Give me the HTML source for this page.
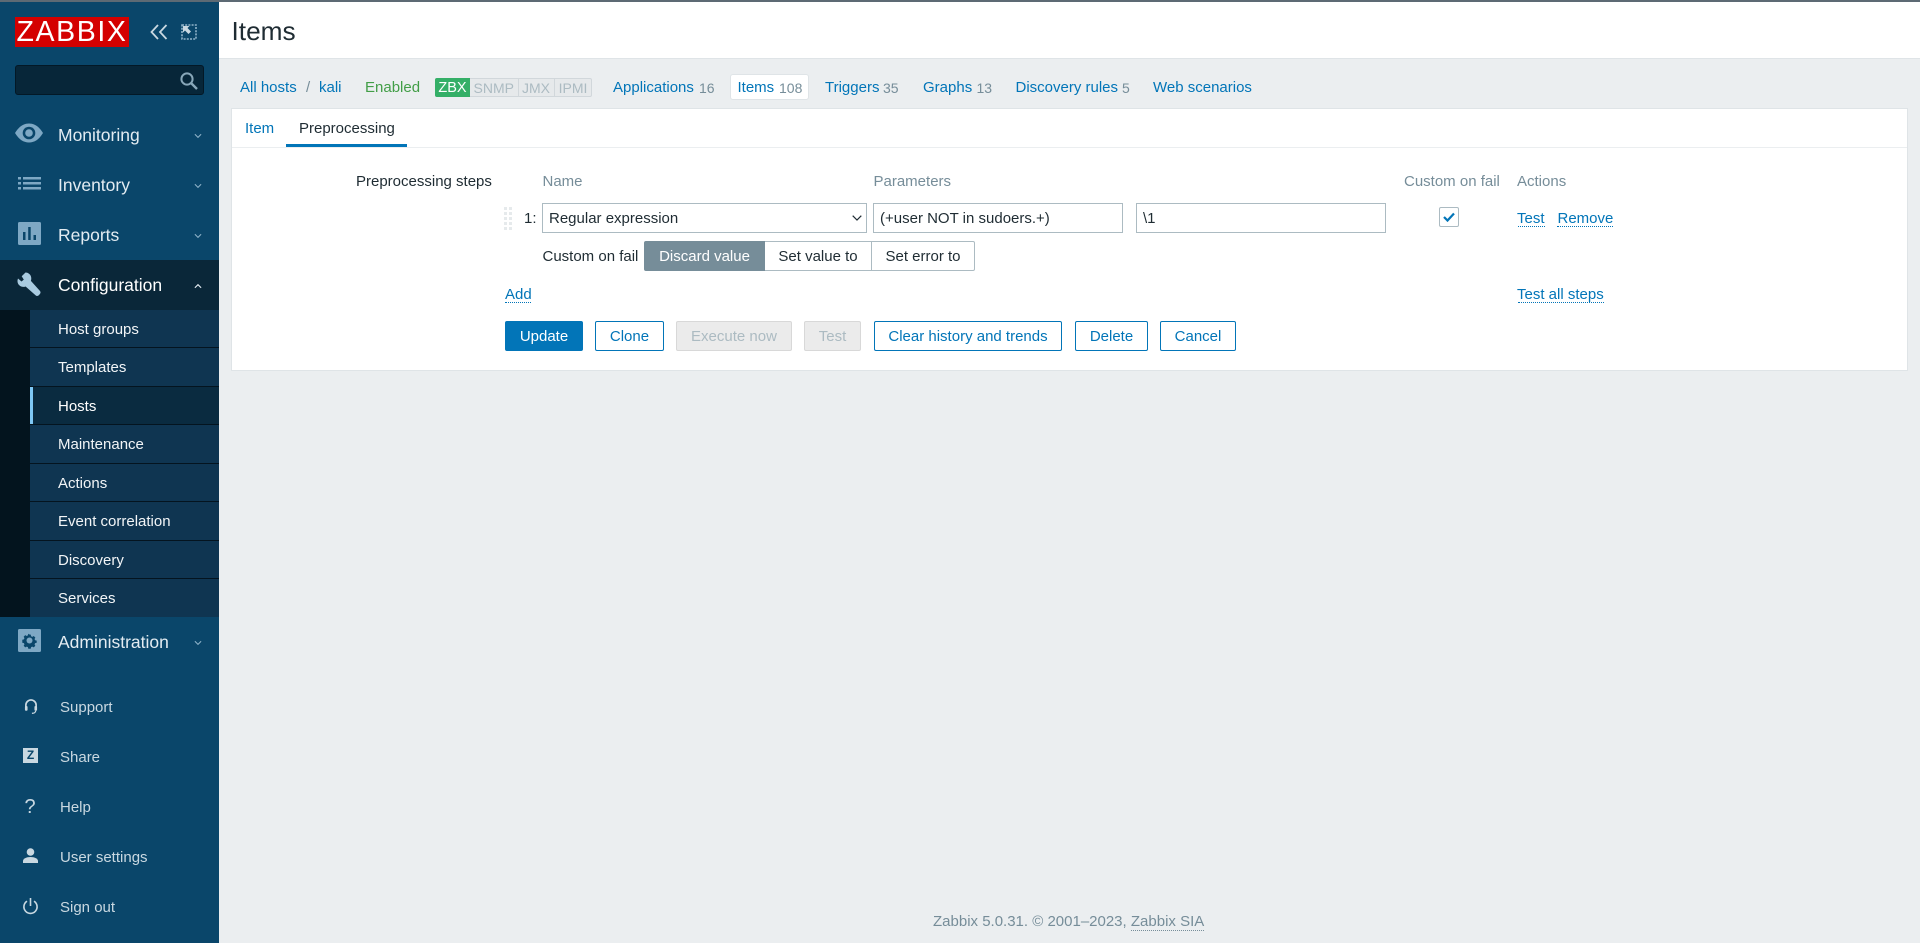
<!DOCTYPE html>
<html lang="en">
<head>
<meta charset="utf-8">
<title>Items</title>
<style>
*{box-sizing:border-box}
html,body{margin:0;padding:0;width:1920px;height:943px;overflow:hidden;background:#ebeef0;font-family:"Liberation Sans",Arial,sans-serif;font-size:15px;color:#1f2c33}
.a{position:absolute;white-space:nowrap}
.t{position:absolute;white-space:nowrap;line-height:20px;height:20px;margin-top:1px}
.l{color:#0275b8}
.m{color:#768d99}
.mi{font-size:17.5px;color:#e3ecf2;left:58px;line-height:24px;height:24px}
.si{font-size:15px;color:#f2f5f7;left:58px}
.bi{font-size:15px;color:#c9d8e1;left:60px}
.sep{position:absolute;left:30px;width:189px;height:1px;background:#04141f}
.dot{position:absolute;border-bottom:1px dotted #0275b8;height:1px}
.btn{position:absolute;top:321px;height:30px;line-height:30px;text-align:center;border:1px solid #0275b8;border-radius:2px;color:#0275b8;background:#fff;white-space:nowrap}
.btn.p{background:#0275b8;color:#fff}
.btn.d{background:#ebebeb;border-color:#d8d8d8;color:#acbbc2}
.inp{position:absolute;top:203px;height:30px;border:1px solid #acbbc2;background:#fff;line-height:30px;padding-left:6px;white-space:nowrap}
.chev{position:absolute}
svg{position:absolute;display:block;overflow:visible}
</style>
</head>
<body>
<!-- top strip -->
<div class="a" style="left:0;top:0;width:1920px;height:2px;background:#5d6a74;z-index:5"></div>

<!-- sidebar -->
<div class="a" style="left:0;top:0;width:219px;height:943px;background:#0a466a"></div>
<div class="a" style="left:15px;top:17px;width:114px;height:30px;background:#d40000;color:#fff;font-size:28.500px;line-height:31px;text-align:center;letter-spacing:1.600px">ZABBIX</div>
<svg style="left:150px;top:24px" width="18" height="16" viewBox="0 0 18 16" fill="none" stroke="#c9d8e1" stroke-width="1.8"><path d="M8 1 1.5 8 8 15M16.5 1 10 8 16.5 15"/></svg>
<svg style="left:181px;top:24px" width="16" height="16" viewBox="0 0 16 16" fill="none"><path d="M1 1h14v14H1z" stroke="#8fb3c9" stroke-width="1.6" stroke-dasharray="2 1.2"/><path d="M2 2h6.500L6.500 4 10 7.500 7.500 10 4 6.500 2 8.500z" fill="#c9d8e1"/></svg>
<div class="a" style="left:15px;top:65px;width:189px;height:30px;background:#072639;border:1px solid #031826;border-radius:3px"></div>
<svg style="left:180px;top:72px" width="18" height="18" viewBox="0 0 18 18" fill="none" stroke="#88a7b9" stroke-width="2"><circle cx="7" cy="7" r="5.6"/><path d="M11 11l6 6" stroke-width="2.4"/></svg>

<!-- monitoring -->
<svg style="left:15px;top:123px" width="28" height="20" viewBox="0 0 28 20"><path d="M0 10C4 3.500 8.500.5 14 .5S24 3.500 28 10c-4 6.500-8.500 9.500-14 9.500S4 16.500 0 10z" fill="#7ea8c4"/><circle cx="14" cy="10" r="6.300" fill="#0a466a"/><circle cx="14" cy="10" r="3.800" fill="#7ea8c4"/></svg>
<div class="t mi" style="top:122px">Monitoring</div>
<svg class="chev" style="left:193.500px;top:133px" width="8" height="6" viewBox="0 0 9 6" fill="none" stroke="#8fb3c9" stroke-width="1.200"><path d="M1 1l3.500 3.500L8 1"/></svg>
<!-- inventory -->
<svg style="left:18px;top:177px" width="23" height="13" viewBox="0 0 23 13" fill="#7ea8c4"><rect x="0" y="0" width="3" height="2.500"/><rect x="0" y="5" width="3" height="2.500"/><rect x="0" y="10" width="3" height="2.500"/><rect x="5" y="0" width="18" height="2.500"/><rect x="5" y="5" width="18" height="2.500"/><rect x="5" y="10" width="18" height="2.500"/></svg>
<div class="t mi" style="top:172px">Inventory</div>
<svg class="chev" style="left:193.500px;top:183px" width="8" height="6" viewBox="0 0 9 6" fill="none" stroke="#8fb3c9" stroke-width="1.200"><path d="M1 1l3.500 3.500L8 1"/></svg>
<!-- reports -->
<svg style="left:18px;top:222px" width="23" height="23" viewBox="0 0 23 23"><rect width="23" height="23" rx="1.500" fill="#7ea8c4"/><rect x="5" y="10" width="2.500" height="8" fill="#0a466a"/><rect x="10.200" y="5" width="2.500" height="13" fill="#0a466a"/><rect x="15.500" y="13" width="2.500" height="5" fill="#0a466a"/></svg>
<div class="t mi" style="top:222px">Reports</div>
<svg class="chev" style="left:193.500px;top:233px" width="8" height="6" viewBox="0 0 9 6" fill="none" stroke="#8fb3c9" stroke-width="1.200"><path d="M1 1l3.500 3.500L8 1"/></svg>

<!-- configuration -->
<div class="a" style="left:0;top:260px;width:219px;height:50px;background:#0a2739"></div>
<svg style="left:17px;top:272px" width="24" height="24" viewBox="0 0 24 24"><path d="M8.500 0.500 4.700 4.300 6.800 7.600 4.500 9.500 1 6.500C0 9 .5 11.600 2.300 13.300 4 15 6.500 15.300 8.600 14.500L18.800 23.500C19.800 24.300 21 24 21.900 23.100L22.900 22C23.700 21 23.800 19.800 22.900 18.900L13.900 8.900C14.700 6.600 14.300 4 12.600 2.300 11.400 1 10 .5 8.500 .5z" fill="#a9cbe0"/></svg>
<div class="t mi" style="top:272px;color:#fff">Configuration</div>
<svg class="chev" style="left:193.500px;top:283px" width="8" height="6" viewBox="0 0 9 6" fill="none" stroke="#e3ecf2" stroke-width="1.300"><path d="M1 5l3.500-3.500L8 5"/></svg>

<!-- submenu -->
<div class="a" style="left:0;top:310px;width:30px;height:307px;background:#03141e"></div>
<div class="a" style="left:30px;top:310px;width:189px;height:307px;background:#0f3551"></div>
<div class="a" style="left:30px;top:387px;width:189px;height:37px;background:#0a2b40"></div>
<div class="a" style="left:30px;top:387px;width:3px;height:37px;background:#7ec8f5"></div>
<div class="sep" style="top:347px"></div>
<div class="sep" style="top:386px"></div>
<div class="sep" style="top:424px"></div>
<div class="sep" style="top:463px"></div>
<div class="sep" style="top:501px"></div>
<div class="sep" style="top:540px"></div>
<div class="sep" style="top:578px"></div>
<div class="t si" style="top:319px">Host groups</div>
<div class="t si" style="top:357px">Templates</div>
<div class="t si" style="top:396px;color:#fff">Hosts</div>
<div class="t si" style="top:434px">Maintenance</div>
<div class="t si" style="top:473px">Actions</div>
<div class="t si" style="top:511px">Event correlation</div>
<div class="t si" style="top:550px">Discovery</div>
<div class="t si" style="top:588px">Services</div>

<!-- administration -->
<svg style="left:18px;top:629px" width="23" height="23" viewBox="0 0 23 23"><rect width="23" height="23" rx="1.500" fill="#7ea8c4"/><path d="M11.500 4l1.500.2.500 2 1.500.7 1.800-1 2 2-1 1.800.7 1.500 2 .5v2.600l-2 .5-.7 1.500 1 1.800-2 2-1.800-1-1.500.7-.5 2H10l-.5-2-1.500-.7-1.800 1-2-2 1-1.800-.7-1.500-2-.5V10.600l2-.5.7-1.500-1-1.800 2-2 1.800 1 1.500-.7.500-2z" fill="#0a466a" transform="translate(2.300 2.300) scale(.8)"/><circle cx="11.500" cy="11.500" r="3" fill="#7ea8c4"/></svg>
<div class="t mi" style="top:629px">Administration</div>
<svg class="chev" style="left:193.500px;top:640px" width="8" height="6" viewBox="0 0 9 6" fill="none" stroke="#8fb3c9" stroke-width="1.200"><path d="M1 1l3.500 3.500L8 1"/></svg>

<!-- bottom nav -->
<svg style="left:24px;top:698px" width="14" height="17" viewBox="0 0 15 17" fill="none" stroke="#c9d8e1" stroke-width="1.800"><path d="M2 10V7a5.500 5.500 0 0 1 11 0v3"/><rect x="1" y="8" width="2.800" height="5" rx="1" fill="#c9d8e1" stroke="none"/><rect x="11.200" y="8" width="2.800" height="5" rx="1" fill="#c9d8e1" stroke="none"/><path d="M12.500 13c0 2-2 2.800-4 2.800" stroke-width="1.400"/></svg>
<div class="t bi" style="top:697px">Support</div>
<div class="a" style="left:23px;top:748px;width:15px;height:15px;background:#c9d8e1;color:#0a466a;font-weight:bold;font-size:12px;line-height:15px;text-align:center">Z</div>
<div class="t bi" style="top:747px">Share</div>
<div class="a" style="left:20px;top:796px;width:20px;height:22px;color:#c9d8e1;font-size:20px;line-height:22px;text-align:center">?</div>
<div class="t bi" style="top:797px">Help</div>
<svg style="left:23px;top:848px" width="15" height="15" viewBox="0 0 15 15" fill="#c9d8e1"><circle cx="7.500" cy="4" r="3.800"/><path d="M0 15v-2c0-2.500 3.500-4 7.500-4s7.500 1.500 7.500 4v2z"/></svg>
<div class="t bi" style="top:847px">User settings</div>
<svg style="left:23px;top:898px" width="15" height="16" viewBox="0 0 15 16" fill="none" stroke="#c9d8e1" stroke-width="1.600"><path d="M7.500 0v8"/><path d="M4 3.200a6.600 6.600 0 1 0 7 0"/></svg>
<div class="t bi" style="top:897px">Sign out</div>

<!-- header -->
<div class="a" style="left:219px;top:2px;width:1701px;height:57px;background:#fff;border-bottom:1px solid #dfe4e7"></div>
<div class="a" style="left:231.500px;top:16px;font-size:26.250px;line-height:30px;color:#1f2c33">Items</div>

<!-- host nav -->
<div class="t l" style="left:240px;top:77px">All hosts</div>
<div class="t m" style="left:306px;top:77px">/</div>
<div class="t l" style="left:319px;top:77px">kali</div>
<div class="t" style="left:365px;top:77px;color:#429e47">Enabled</div>
<div class="a" style="left:435px;top:78px;width:157px;height:19px;border:1px solid #d1d7db;border-radius:2px;background:#e6e9eb"></div>
<div class="a" style="left:435px;top:78px;width:35px;height:19px;background:#34af67;border-radius:2px 0 0 2px;color:#fff;line-height:20px;text-align:center;font-size:14.500px">ZBX</div>
<div class="a" style="left:470px;top:78px;width:48.500px;height:19px;color:#acbbc2;line-height:20px;text-align:center;border-right:1px solid #d1d7db;font-size:14px">SNMP</div>
<div class="a" style="left:518.500px;top:78px;width:36px;height:19px;color:#acbbc2;line-height:20px;text-align:center;border-right:1px solid #d1d7db;font-size:14px">JMX</div>
<div class="a" style="left:554.500px;top:78px;width:37px;height:19px;color:#acbbc2;line-height:20px;text-align:center;font-size:14px">IPMI</div>
<div class="t l" style="left:613px;top:77px">Applications</div>
<div class="t m" style="left:699px;top:77px;font-size:14px">16</div>
<div class="a" style="left:730px;top:74px;width:79px;height:26px;background:#fff;border:1px solid #dfe4e7;border-radius:3px"></div>
<div class="t l" style="left:737.500px;top:77px">Items</div>
<div class="t m" style="left:779px;top:77px;font-size:14px">108</div>
<div class="t l" style="left:825px;top:77px">Triggers</div>
<div class="t m" style="left:883px;top:77px;font-size:14px">35</div>
<div class="t l" style="left:923px;top:77px">Graphs</div>
<div class="t m" style="left:976.500px;top:77px;font-size:14px">13</div>
<div class="t l" style="left:1015.500px;top:77px">Discovery rules</div>
<div class="t m" style="left:1122px;top:77px;font-size:14px">5</div>
<div class="t l" style="left:1153px;top:77px">Web scenarios</div>

<!-- panel -->
<div class="a" style="left:231px;top:108px;width:1677px;height:263px;background:#fff;border:1px solid #dfe4e7"></div>
<div class="a" style="left:232px;top:147px;width:1675px;height:1px;background:#ebeef0"></div>
<div class="t l" style="left:245px;top:118px">Item</div>
<div class="t" style="left:299px;top:118px">Preprocessing</div>
<div class="a" style="left:286px;top:144px;width:121px;height:3px;background:#0275b8"></div>

<!-- form -->
<div class="t" style="left:356px;top:171px">Preprocessing steps</div>
<div class="t m" style="left:542.500px;top:171px">Name</div>
<div class="t m" style="left:873.500px;top:171px">Parameters</div>
<div class="t m" style="left:1404px;top:171px">Custom on fail</div>
<div class="t m" style="left:1517px;top:171px">Actions</div>

<svg style="left:504px;top:207px" width="8" height="23" viewBox="0 0 8 23" fill="#e6eaec"><rect x="0" y="0" width="3" height="3"/><rect x="5" y="0" width="3" height="3"/><rect x="0" y="5" width="3" height="3"/><rect x="5" y="5" width="3" height="3"/><rect x="0" y="10" width="3" height="3"/><rect x="5" y="10" width="3" height="3"/><rect x="0" y="15" width="3" height="3"/><rect x="5" y="15" width="3" height="3"/><rect x="0" y="20" width="3" height="3"/><rect x="5" y="20" width="3" height="3"/></svg>
<div class="t" style="left:524px;top:208px">1:</div>
<div class="inp" style="left:542px;width:325px;padding-left:6px">Regular expression</div>
<svg style="left:852px;top:215px" width="10" height="6" viewBox="0 0 10 6" fill="none" stroke="#1f2c33" stroke-width="1.200"><path d="M.7.7 5 5 9.300.7"/></svg>
<div class="inp" style="left:873px;width:250px">(+user NOT in sudoers.+)</div>
<div class="inp" style="left:1136px;width:250px">\1</div>
<div class="a" style="left:1439px;top:207px;width:20px;height:20px;border:1px solid #acbbc2;border-radius:2px;background:#fff"></div>
<svg style="left:1443px;top:212px" width="12" height="10" viewBox="0 0 12 10" fill="none" stroke="#0275b8" stroke-width="2.200"><path d="M1 5l3.500 3.500L11 1.500"/></svg>
<div class="t l" style="left:1517px;top:208px">Test</div>
<div class="dot" style="left:1518px;top:226px;width:27px"></div>
<div class="t l" style="left:1557.500px;top:208px">Remove</div>
<div class="dot" style="left:1557px;top:226px;width:56px"></div>

<div class="t" style="left:542.500px;top:246px">Custom on fail</div>
<div class="a" style="left:644px;top:241px;width:121px;height:30px;background:#768d99;color:#fff;line-height:32px;text-align:center;border-radius:2px 0 0 2px">Discard value</div>
<div class="a" style="left:765px;top:241px;width:107px;height:30px;background:#fff;border:1px solid #acbbc2;border-left:0;line-height:30px;text-align:center">Set value to</div>
<div class="a" style="left:871px;top:241px;width:104px;height:30px;background:#fff;border:1px solid #acbbc2;border-radius:0 2px 2px 0;line-height:30px;text-align:center">Set error to</div>

<div class="t l" style="left:505px;top:284px">Add</div>
<div class="dot" style="left:505px;top:302px;width:26px"></div>
<div class="t l" style="left:1517px;top:284px">Test all steps</div>
<div class="dot" style="left:1518px;top:302px;width:86px"></div>

<div class="btn p" style="left:505px;width:78px">Update</div>
<div class="btn" style="left:595px;width:69px">Clone</div>
<div class="btn d" style="left:676px;width:116px">Execute now</div>
<div class="btn d" style="left:804px;width:57px">Test</div>
<div class="btn" style="left:874px;width:188px">Clear history and trends</div>
<div class="btn" style="left:1075px;width:73px">Delete</div>
<div class="btn" style="left:1160px;width:76px">Cancel</div>

<!-- footer -->
<div class="t m" style="left:933px;top:911px">Zabbix 5.0.31. © 2001–2023, <span style="border-bottom:1px dotted #768d99">Zabbix SIA</span></div>
</body>
</html>
